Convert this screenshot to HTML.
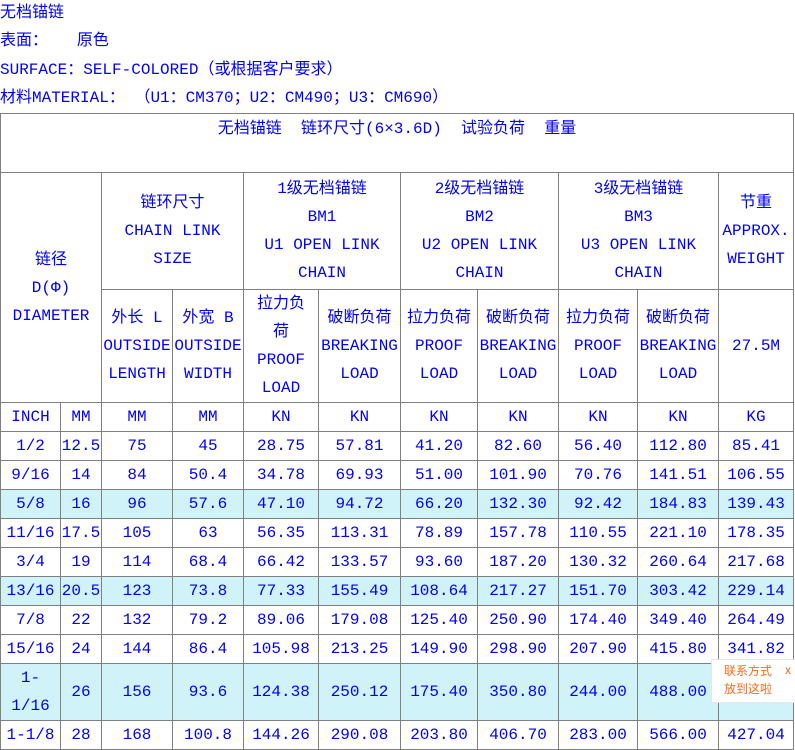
<!DOCTYPE html>
<html><head><meta charset="utf-8"><style>
body{margin:0;background:#fff;width:795px;height:750px;overflow:hidden;position:relative;font-family:"Liberation Mono","Noto Sans CJK SC",monospace;color:#0000ff;font-size:16px}
.top{position:absolute;left:0;line-height:16px;white-space:pre}
.fl{display:inline-block;width:16px;text-align:right}
.fr{display:inline-block;width:16px;text-align:left}
table{position:absolute;left:0;top:113px;border-collapse:collapse;table-layout:fixed;width:793px}
td{border:1px solid #808080;text-align:center;vertical-align:middle;padding:0;line-height:28px;white-space:nowrap;overflow:hidden}
tr.c td{background:#cff3f9}
.pop{position:absolute;left:711px;top:659px;width:84px;height:42px;background:#fff;border:1px solid #e6e6e6;color:#ff6a1a;font-size:12px;line-height:18px;font-family:"Noto Sans CJK SC",sans-serif}
</style></head><body>
<div class="top" style="top:5px">无档锚链</div>
<div class="top" style="top:33px">表面<span class="fr">：</span>   原色</div>
<div class="top" style="top:62px">SURFACE<span class="fr">：</span>SELF-COLORED<span class="fl">（</span>或根据客户要求<span class="fr">）</span></div>
<div class="top" style="top:90px">材料MATERIAL<span class="fr">：</span> <span class="fl">（</span>U1<span class="fr">：</span>CM370<span class="fr">；</span>U2<span class="fr">：</span>CM490<span class="fr">；</span>U3<span class="fr">：</span>CM690<span class="fr">）</span></div>
<table>
<colgroup><col style="width:60px"><col style="width:41px"><col style="width:71px"><col style="width:71px"><col style="width:75px"><col style="width:82px"><col style="width:77px"><col style="width:81px"><col style="width:79px"><col style="width:81px"><col style="width:75px"></colgroup>
<tr style="height:59px"><td colspan="11" style="vertical-align:top;line-height:30px;white-space:pre">无档锚链  链环尺寸(6×3.6D)  试验负荷  重量</td></tr>
<tr style="height:117px"><td colspan="2" rowspan="2">链径<br>D(Φ)<br>DIAMETER</td><td colspan="2">链环尺寸<br>CHAIN LINK<br>SIZE</td><td colspan="2">1级无档锚链<br>BM1<br>U1 OPEN LINK<br>CHAIN</td><td colspan="2">2级无档锚链<br>BM2<br>U2 OPEN LINK<br>CHAIN</td><td colspan="2">3级无档锚链<br>BM3<br>U3 OPEN LINK<br>CHAIN</td><td>节重<br>APPROX.<br>WEIGHT</td></tr>
<tr style="height:113px"><td>外长 L<br>OUTSIDE<br>LENGTH</td><td>外宽 B<br>OUTSIDE<br>WIDTH</td><td>拉力负<br>荷<br>PROOF<br>LOAD</td><td>破断负荷<br>BREAKING<br>LOAD</td><td>拉力负荷<br>PROOF<br>LOAD</td><td>破断负荷<br>BREAKING<br>LOAD</td><td>拉力负荷<br>PROOF<br>LOAD</td><td>破断负荷<br>BREAKING<br>LOAD</td><td>27.5M</td></tr>
<tr style="height:29px"><td>INCH</td><td>MM</td><td>MM</td><td>MM</td><td>KN</td><td>KN</td><td>KN</td><td>KN</td><td>KN</td><td>KN</td><td>KG</td></tr>
<tr style="height:29px"><td>1/2</td><td>12.5</td><td>75</td><td>45</td><td>28.75</td><td>57.81</td><td>41.20</td><td>82.60</td><td>56.40</td><td>112.80</td><td>85.41</td></tr>
<tr style="height:29px"><td>9/16</td><td>14</td><td>84</td><td>50.4</td><td>34.78</td><td>69.93</td><td>51.00</td><td>101.90</td><td>70.76</td><td>141.51</td><td>106.55</td></tr>
<tr class="c" style="height:29px"><td>5/8</td><td>16</td><td>96</td><td>57.6</td><td>47.10</td><td>94.72</td><td>66.20</td><td>132.30</td><td>92.42</td><td>184.83</td><td>139.43</td></tr>
<tr style="height:29px"><td>11/16</td><td>17.5</td><td>105</td><td>63</td><td>56.35</td><td>113.31</td><td>78.89</td><td>157.78</td><td>110.55</td><td>221.10</td><td>178.35</td></tr>
<tr style="height:29px"><td>3/4</td><td>19</td><td>114</td><td>68.4</td><td>66.42</td><td>133.57</td><td>93.60</td><td>187.20</td><td>130.32</td><td>260.64</td><td>217.68</td></tr>
<tr class="c" style="height:29px"><td>13/16</td><td>20.5</td><td>123</td><td>73.8</td><td>77.33</td><td>155.49</td><td>108.64</td><td>217.27</td><td>151.70</td><td>303.42</td><td>229.14</td></tr>
<tr style="height:29px"><td>7/8</td><td>22</td><td>132</td><td>79.2</td><td>89.06</td><td>179.08</td><td>125.40</td><td>250.90</td><td>174.40</td><td>349.40</td><td>264.49</td></tr>
<tr style="height:29px"><td>15/16</td><td>24</td><td>144</td><td>86.4</td><td>105.98</td><td>213.25</td><td>149.90</td><td>298.90</td><td>207.90</td><td>415.80</td><td>341.82</td></tr>
<tr class="c" style="height:57px"><td>1-<br>1/16</td><td>26</td><td>156</td><td>93.6</td><td>124.38</td><td>250.12</td><td>175.40</td><td>350.80</td><td>244.00</td><td>488.00</td><td></td></tr>
<tr style="height:29px"><td>1-1/8</td><td>28</td><td>168</td><td>100.8</td><td>144.26</td><td>290.08</td><td>203.80</td><td>406.70</td><td>283.00</td><td>566.00</td><td>427.04</td></tr>
</table>
<div class="pop"><div style="position:absolute;left:12px;top:2px">联系方式</div><div style="position:absolute;left:12px;top:20px">放到这啦</div><div style="position:absolute;left:73px;top:1px">x</div></div>
</body></html>
